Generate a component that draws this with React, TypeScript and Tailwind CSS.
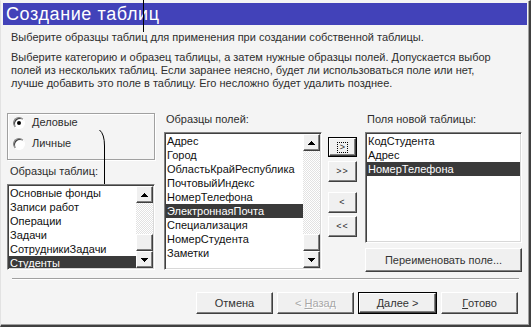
import React from "react";

const leftItems = ["Основные фонды", "Записи работ", "Операции", "Задачи", "СотрудникиЗадачи", "Студенты"];
const fieldItems = [
  "Адрес",
  "Город",
  "ОбластьКрайРеспублика",
  "ПочтовыйИндекс",
  "НомерТелефона",
  "ЭлектроннаяПочта",
  "Специализация",
  "НомерСтудента",
  "Заметки",
];
const newFields = ["КодСтудента", "Адрес", "НомерТелефона"];

const raised =
  "border border-t-white border-l-white border-r-[#404040] border-b-[#404040] shadow-[inset_-1px_-1px_0_#808080] bg-[#f0f0f0]";
const sunken =
  "border border-t-[#808080] border-l-[#808080] border-r-white border-b-white shadow-[inset_1px_1px_0_#404040,inset_-1px_-1px_0_#d8d8d8] bg-white p-[1px]";

function Arrow({ down }: { down?: boolean }) {
  return (
    <svg width="7" height="4" viewBox="0 0 7 4" shapeRendering="crispEdges" className={down ? "rotate-180" : ""}>
      <path d="M3 0h1v1h1v1h1v1h1v1H0V3h1V2h1V1h1z" fill="#000" />
    </svg>
  );
}

function ScrollBar() {
  return (
    <div className="flex w-[17px] shrink-0 flex-col">
      <div className={`${raised} flex h-[17px] items-center justify-center`}>
        <Arrow />
      </div>
      <div className="flex flex-1 flex-col justify-end bg-[repeating-conic-gradient(#ffffff_0%_25%,#e2e2e2_0%_50%)] bg-[length:2px_2px]">
        <div className={`${raised} h-[17px]`} />
      </div>
      <div className={`${raised} flex h-[17px] items-center justify-center`}>
        <Arrow down />
      </div>
    </div>
  );
}

function ListBox({
  items,
  selected,
  scroll,
  className,
}: {
  items: string[];
  selected: number;
  scroll?: boolean;
  className: string;
}) {
  return (
    <div className={`${sunken} flex overflow-hidden ${className}`}>
      <div className="min-w-0 flex-1 overflow-hidden">
        {items.map((it, i) => (
          <div
            key={it + i}
            className={`h-[14px] whitespace-nowrap pl-[1px] leading-[14px] ${
              i === selected ? "bg-[#3a3a3a] text-white" : "text-[#111]"
            }`}
          >
            {it}
          </div>
        ))}
      </div>
      {scroll && <ScrollBar />}
    </div>
  );
}

function Radio({ checked, label }: { checked?: boolean; label: string }) {
  return (
    <div className="flex h-[13px] items-center gap-[7px]">
      <div className="flex h-3 w-3 items-center justify-center rounded-full border border-t-[#808080] border-l-[#808080] border-r-white border-b-white bg-white shadow-[inset_1px_1px_0_#404040]">
        {checked && <div className="h-1 w-1 rounded-full bg-black" />}
      </div>
      <span>{label}</span>
    </div>
  );
}

function MoveBtn({ label, focused }: { label: string; focused?: boolean }) {
  if (focused) {
    return (
      <div className="h-[20px] w-[29px] border border-black">
        <div className={`${raised} flex h-full items-center justify-center`}>
          <span className="border border-dotted border-black px-[2px] text-[9px] leading-[9px]">&gt;</span>
        </div>
      </div>
    );
  }
  return (
    <div className={`${raised} flex h-[21px] w-[29px] items-center justify-center text-[9px] tracking-[1px]`}>
      {label}
    </div>
  );
}

export default function App() {
  return (
    <div className="relative h-[327px] w-[532px] bg-white font-['Liberation_Sans',Arial,sans-serif] text-[11px] leading-[13px] text-[#2e2e2e]">
      <div className="flex h-[327px] w-[531px] flex-col border-t border-l border-t-[#f4f4f4] border-l-[#e2e2e2] border-r-2 border-b-2 border-r-[#404040] border-b-[#404040] bg-[#f4f4f4] shadow-[inset_-1px_-1px_0_#a0a0a0]">
        <div className="mx-[2px] mt-[2px] flex h-[22px] items-center bg-[#4242b9] pl-[3px] text-[18px] leading-[22px] tracking-[0.6px] text-white">
          Создание таблиц
        </div>

        <div className="mt-[6px] pl-[10px] whitespace-nowrap">
          Выберите образцы таблиц для применения при создании собственной таблицы.
        </div>
        <div className="mt-[7px] pl-[10px] whitespace-nowrap">
          Выберите категорию и образец таблицы, а затем нужные образцы полей. Допускается выбор
          <br />
          полей из нескольких таблиц. Если заранее неясно, будет ли использоваться поле или нет,
          <br />
          лучше добавить это поле в таблицу. Его несложно будет удалить позднее.
        </div>

        <div className="mt-[23px] flex items-start pl-[6px]">
          {/* left column */}
          <div className="flex w-[148px] flex-col">
            <div className="flex h-[47px] flex-col gap-[8px] border border-[#a0a0a0] pt-[2px] pl-[5px] shadow-[1px_1px_0_#fff,inset_1px_1px_0_#fff]">
              <Radio checked label="Деловые" />
              <Radio label="Личные" />
            </div>
            <div className="mt-[5px] pl-[3px]">Образцы таблиц:</div>
            <ListBox items={leftItems} selected={5} scroll className="mt-[6px] h-[86px]" />
          </div>

          {/* fields */}
          <div className="ml-[9px] flex w-[158px] flex-col">
            <div className="pl-[2px]">Образцы полей:</div>
            <ListBox items={fieldItems} selected={5} scroll className="mt-[6px] h-[138px]" />
          </div>

          {/* move buttons */}
          <div className="ml-[6px] flex flex-col pt-[24px]">
            <MoveBtn label=">" focused />
            <div className="mt-[4px]">
              <MoveBtn label=">>" />
            </div>
            <div className="mt-[10px]">
              <MoveBtn label="<" />
            </div>
            <div className="mt-[3px]">
              <MoveBtn label="<<" />
            </div>
          </div>

          {/* new table fields */}
          <div className="ml-[8px] flex w-[157px] flex-col">
            <div className="pl-[2px]">Поля новой таблицы:</div>
            <ListBox items={newFields} selected={2} className="mt-[6px] h-[111px]" />
            <div className={`${raised} mt-[5px] flex h-[24px] items-center justify-center text-[#333]`}>
              Переименовать поле...
            </div>
          </div>
        </div>

        <div className="mt-[6px] ml-[11px] mr-[10px] h-[2px] border-t border-t-[#a0a0a0] border-b border-b-white" />

        <div className="mt-[12px] flex justify-end gap-[4px] pr-[11px] text-[#333]">
          <div className={`${raised} flex h-[22px] w-[77px] items-center justify-center`}>Отмена</div>
          <div
            className={`${raised} flex h-[22px] w-[77px] items-center justify-center text-[#a8a8a8] [text-shadow:1px_1px_0_#fff]`}
          >
            &lt;&nbsp;<span className="underline">Н</span>азад
          </div>
          <div className="h-[22px] w-[79px] border border-black">
            <div className={`${raised} flex h-full items-center justify-center`}>
              <span className="underline">Д</span>алее &gt;
            </div>
          </div>
          <div className={`${raised} flex h-[22px] w-[77px] items-center justify-center`}>
            <span className="underline">Г</span>отово
          </div>
        </div>
      </div>

      <svg className="pointer-events-none absolute top-0 left-0" width="532" height="327">
        <path d="M143.5 0V32" stroke="#000" fill="none" />
        <path d="M99.5 130Q104.5 134 104.5 146V184" stroke="#000" fill="none" />
      </svg>
    </div>
  );
}
